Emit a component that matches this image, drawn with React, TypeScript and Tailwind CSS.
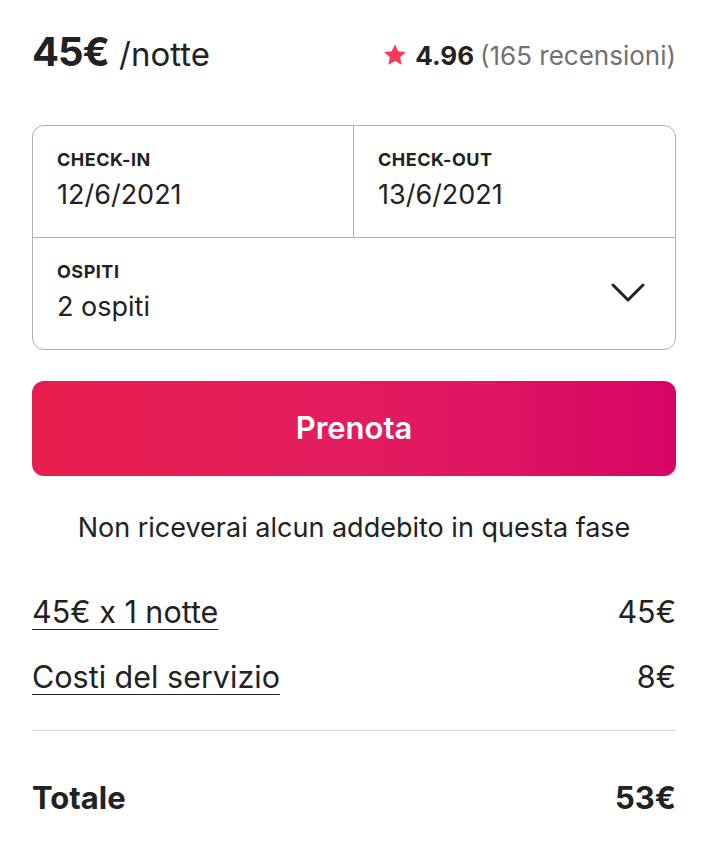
function Field({ label, value }: { label: string; value: string }) {
  return (
    <div className="pt-[24px] px-[24px]">
      <div className="text-[18px] leading-[20px] font-bold tracking-[0.5px] text-[#222222]">{label}</div>
      <div className="mt-[9px] text-[27px] leading-[32px] text-[#222222]">{value}</div>
    </div>
  );
}

function Row({ label, value }: { label: string; value: string }) {
  return (
    <div className="flex justify-between items-center text-[30.5px] leading-[36px] text-[#222222]">
      <span className="underline underline-offset-[6px] decoration-[1px]">{label}</span>
      <span>{value}</span>
    </div>
  );
}

export default function App() {
  return (
    <main
      className="min-h-screen bg-white pl-8 pr-[42px] pt-[28px] text-[#222222]"
      style={{ fontFamily: 'Inter, "Noto Sans", sans-serif' }}
    >
      <div className="flex justify-between items-center h-[48px]">
        <div className="flex items-baseline gap-[10px]">
          <span className="text-[40px] font-bold tracking-tight">45€</span>
          <span className="text-[33px]">/notte</span>
        </div>
        <div className="flex items-center text-[26px] mt-[6px]">
          <svg viewBox="0 0 32 32" className="w-[24px] h-[24px] mr-[8px] fill-[#ff385c]">
            <path d="M16 1.6l4.3 9.4 10.2 1.1-7.6 6.9 2.1 10.1L16 23.9l-9 5.2 2.1-10.1-7.6-6.9 10.2-1.1z" />
          </svg>
          <span className="font-bold">4.96</span>
          <span className="ml-[6px] text-[#717171]">(165 recensioni)</span>
        </div>
      </div>

      <div className="mt-[49px] border border-[#b0b0b0] rounded-[12px]">
        <div className="grid grid-cols-2 h-[112px] border-b border-[#b0b0b0]">
          <div className="border-r border-[#b0b0b0]">
            <Field label="CHECK-IN" value="12/6/2021" />
          </div>
          <Field label="CHECK-OUT" value="13/6/2021" />
        </div>
        <div className="flex items-start justify-between h-[111px]">
          <Field label="OSPITI" value="2 ospiti" />
          <svg
            viewBox="0 0 34 20"
            className="mt-[45px] mr-[30px] w-[34px] h-[20px] fill-none stroke-[#222222]"
            strokeWidth={3}
            strokeLinecap="round"
            strokeLinejoin="round"
          >
            <polyline points="2,2 17,17 32,2" />
          </svg>
        </div>
      </div>

      <button className="mt-[31px] w-full h-[95px] rounded-[12px] bg-gradient-to-r from-[#e61e4d] via-[#e31c5f] to-[#d70466] text-white text-[31px] font-semibold">
        Prenota
      </button>

      <p className="mt-[36px] text-center text-[27px] leading-[32px]">
        Non riceverai alcun addebito in questa fase
      </p>

      <div className="mt-[50px] flex flex-col gap-[29px]">
        <Row label="45€ x 1 notte" value="45€" />
        <Row label="Costi del servizio" value="8€" />
      </div>

      <div className="mt-[35px] border-t border-[#dddddd]" />

      <div className="mt-[49px] flex justify-between items-center text-[31px] leading-[36px] font-bold">
        <span>Totale</span>
        <span>53€</span>
      </div>
    </main>
  );
}
